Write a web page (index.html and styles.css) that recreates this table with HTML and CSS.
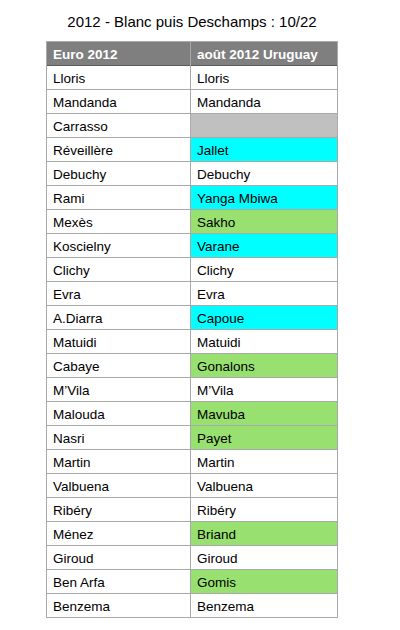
FILE: index.html
```html
<!DOCTYPE html>
<html lang="fr">
<head>
<meta charset="utf-8">
<title>2012 - Blanc puis Deschamps</title>
<link rel="stylesheet" href="styles.css">
</head>
<body>
<div class="wrap">
  <h1 class="title">2012 - Blanc puis Deschamps : 10/22</h1>
  <div class="grid">
    <div class="cell head">Euro 2012</div><div class="cell head">août 2012 Uruguay</div>
    <div class="cell">Lloris</div><div class="cell">Lloris</div>
    <div class="cell">Mandanda</div><div class="cell">Mandanda</div>
    <div class="cell">Carrasso</div><div class="cell empty"></div>
    <div class="cell">Réveillère</div><div class="cell cyan">Jallet</div>
    <div class="cell">Debuchy</div><div class="cell">Debuchy</div>
    <div class="cell">Rami</div><div class="cell cyan">Yanga Mbiwa</div>
    <div class="cell">Mexès</div><div class="cell green">Sakho</div>
    <div class="cell">Koscielny</div><div class="cell cyan">Varane</div>
    <div class="cell">Clichy</div><div class="cell">Clichy</div>
    <div class="cell">Evra</div><div class="cell">Evra</div>
    <div class="cell">A.Diarra</div><div class="cell cyan">Capoue</div>
    <div class="cell">Matuidi</div><div class="cell">Matuidi</div>
    <div class="cell">Cabaye</div><div class="cell green">Gonalons</div>
    <div class="cell">M’Vila</div><div class="cell">M’Vila</div>
    <div class="cell">Malouda</div><div class="cell green">Mavuba</div>
    <div class="cell">Nasri</div><div class="cell green">Payet</div>
    <div class="cell">Martin</div><div class="cell">Martin</div>
    <div class="cell">Valbuena</div><div class="cell">Valbuena</div>
    <div class="cell">Ribéry</div><div class="cell">Ribéry</div>
    <div class="cell">Ménez</div><div class="cell green">Briand</div>
    <div class="cell">Giroud</div><div class="cell">Giroud</div>
    <div class="cell">Ben Arfa</div><div class="cell green">Gomis</div>
    <div class="cell">Benzema</div><div class="cell">Benzema</div>
  </div>
</div>
</body>
</html>
```
FILE: styles.css
```css
html, body {
  margin: 0;
  padding: 0;
  background: #ffffff;
}
body {
  font-family: "Liberation Sans", Arial, Helvetica, sans-serif;
  color: #000;
}
.wrap {
  margin-left: 46px;
  width: 292px;
}
.title {
  margin: 0 0 10px 0;
  padding-top: 13px;
  font-size: 15px;
  line-height: 18px;
  font-weight: normal;
  text-align: center;
  white-space: nowrap;
}
.grid {
  display: grid;
  grid-template-columns: 143px 146px;
  grid-auto-rows: 23px;
  gap: 1px;
  padding: 1px;
  background: #a9a9a9;
}
.cell {
  background: #ffffff;
  font-size: 13.5px;
  line-height: 20px;
  padding-top: 3px;
  padding-left: 6px;
  white-space: nowrap;
  overflow: hidden;
}
.head {
  background: #7f7f7f;
  color: #ffffff;
  font-weight: bold;
  box-shadow: 0 1px 0 #5a5a5a;
}
.empty { background: #c0c0c0; }
.cyan { background: #00ffff; }
.green { background: #98e06f; }
```
